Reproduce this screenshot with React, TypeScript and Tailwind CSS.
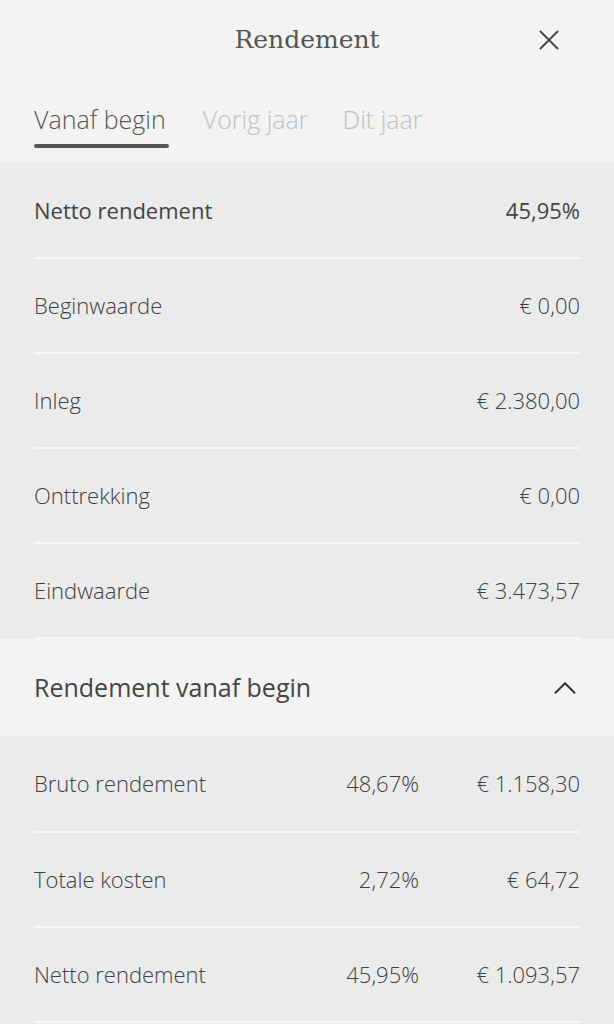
import { X, ChevronUp } from "lucide-react";

const summary = [
  { label: "Beginwaarde", value: "€ 0,00" },
  { label: "Inleg", value: "€ 2.380,00" },
  { label: "Onttrekking", value: "€ 0,00" },
  { label: "Eindwaarde", value: "€ 3.473,57" },
];

const breakdown = [
  { label: "Bruto rendement", pct: "48,67%", value: "€ 1.158,30" },
  { label: "Totale kosten", pct: "2,72%", value: "€ 64,72" },
  { label: "Netto rendement", pct: "45,95%", value: "€ 1.093,57" },
];

export default function App() {
  return (
    <div
      className="min-h-screen w-[614px] bg-[#ebebeb] font-light text-[#404040]"
      style={{ fontFamily: "'Open Sans', Lato, sans-serif" }}
    >
      {/* Header */}
      <div className="bg-[#f3f3f3]">
        <div className="relative flex h-[80px] items-center justify-center">
          <h1
            className="text-[25px] font-normal text-[#555]"
            style={{ fontFamily: "'DejaVu Serif', 'Liberation Serif', serif" }}
          >
            Rendement
          </h1>
          <button className="absolute right-[48px] top-[23px] text-[#444]">
            <X size={34} strokeWidth={1.3} />
          </button>
        </div>
        <div className="flex h-[82px] items-start gap-[34px] px-[34px] pt-[21px] text-[25px]">
          <div className="flex flex-col">
            <span className="pr-[3px] text-[#555]">Vanaf begin</span>
            <span className="mt-[5px] h-[4px] rounded-full bg-[#555]"></span>
          </div>
          <span className="text-[#c2c2c2]">Vorig jaar</span>
          <span className="text-[#c2c2c2]">Dit jaar</span>
        </div>
      </div>

      {/* Summary */}
      <div className="px-[34px] text-[22px]">
        <div className="flex h-[97px] items-center justify-between border-b-2 border-[#f7f7f7] pt-[2px] font-normal text-[#444]">
          <span>Netto rendement</span>
          <span>45,95%</span>
        </div>
        {summary.map((row) => (
          <div
            key={row.label}
            className="flex h-[95px] items-center justify-between border-b-2 border-[#f7f7f7]"
          >
            <span>{row.label}</span>
            <span>{row.value}</span>
          </div>
        ))}
      </div>

      {/* Section header */}
      <div className="flex h-[97px] items-center justify-between bg-[#f3f3f3] pl-[34px] pr-[30px]">
        <span className="text-[25px] font-normal text-[#444]">
          Rendement vanaf begin
        </span>
        <ChevronUp size={38} strokeWidth={1.25} className="text-[#333]" />
      </div>

      {/* Breakdown */}
      <div className="px-[34px] text-[22px]">
        {breakdown.map((row, i) => (
          <div
            key={row.label}
            className={`flex items-center border-b-2 border-[#f7f7f7] ${
              i === 0 ? "h-[97px]" : "h-[95px]"
            }`}
          >
            <span className="flex-1">{row.label}</span>
            <span>{row.pct}</span>
            <span className="w-[161px] text-right">{row.value}</span>
          </div>
        ))}
      </div>
    </div>
  );
}
